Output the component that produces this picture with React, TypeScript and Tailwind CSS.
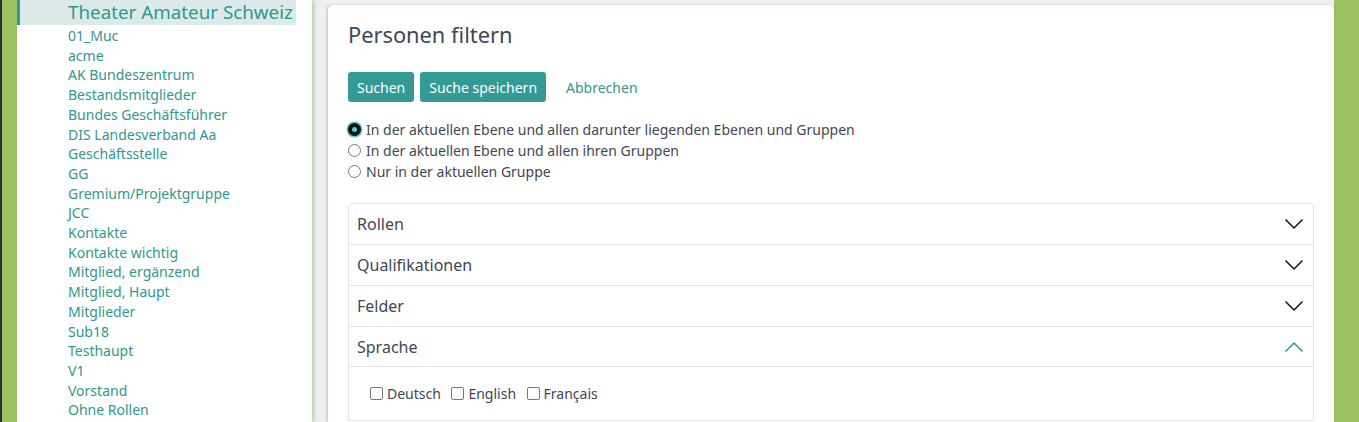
/**
 * Personen filtern — group sidebar plus filter card.
 */

const GROUPS = [
  '01_Muc',
  'acme',
  'AK Bundeszentrum',
  'Bestandsmitglieder',
  'Bundes Geschäftsführer',
  'DIS Landesverband Aa',
  'Geschäftsstelle',
  'GG',
  'Gremium/Projektgruppe',
  'JCC',
  'Kontakte',
  'Kontakte wichtig',
  'Mitglied, ergänzend',
  'Mitglied, Haupt',
  'Mitglieder',
  'Sub18',
  'Testhaupt',
  'V1',
  'Vorstand',
  'Ohne Rollen',
];

const RANGES = [
  'In der aktuellen Ebene und allen darunter liegenden Ebenen und Gruppen',
  'In der aktuellen Ebene und allen ihren Gruppen',
  'Nur in der aktuellen Gruppe',
];

const SECTIONS = ['Rollen', 'Qualifikationen', 'Felder'];

function Chevron({ up = false }: { up?: boolean }) {
  return (
    <svg width="20" height="12" viewBox="0 0 20 12" fill="none" className={up ? 'text-[#31978f]' : 'text-[#111]'}>
      <polyline
        points={up ? '1.5,10.5 10,2 18.5,10.5' : '1.5,1.5 10,10 18.5,1.5'}
        stroke="currentColor"
        strokeWidth="1.5"
      />
    </svg>
  );
}

export default function App() {
  return (
    <div
      className="flex h-[422px] overflow-hidden bg-[#9bbf62] text-[#3f4754]"
      style={{ fontFamily: '"Noto Sans", "Open Sans", sans-serif' }}
    >
      <div className="w-[2px] shrink-0 bg-[#2d2d2d]" />
      <div className="w-[15px] shrink-0" />

      <aside className="z-10 w-[295px] shrink-0 bg-white shadow-[2px_0_4px_rgba(140,180,80,0.55)]">
        <div className="flex h-[25px] w-[279px] items-center border-l-[3px] border-[#31978f] bg-[#dcebea] pl-[48px] text-[18.8px] text-[#31978f]">
          Theater Amateur Schweiz
        </div>
        <ul className="pt-[1px]">
          {GROUPS.map((g) => (
            <li key={g} className="pl-[51px] text-[14px] leading-[19.7px] text-[#31978f]">
              {g}
            </li>
          ))}
        </ul>
      </aside>

      <main className="flex-1 bg-[#eef0f3] pl-[16px] pt-[5px]">
        <div className="h-full rounded-t-[5px] bg-white px-[20px] pt-[19px] shadow-[-1px_0_3px_rgba(140,180,80,0.6)]">
          <h1 className="text-[21.8px] leading-[22px]">Personen filtern</h1>

          <div className="mt-[26px] flex items-center gap-[6px] text-[14px]">
            <button className="h-[30px] rounded-[3px] bg-[#339a95] px-[9px] text-white">Suchen</button>
            <button className="h-[30px] rounded-[3px] bg-[#339a95] px-[9px] text-white">Suche speichern</button>
            <a className="ml-[14px] text-[#31978f]">Abbrechen</a>
          </div>

          <div className="mt-[17px] flex flex-col text-[14px] leading-[21px]">
            {RANGES.map((r, i) => (
              <label key={r} className="flex items-center gap-[5px]">
                {i === 0 ? (
                  <span className="flex h-[13px] w-[13px] items-center justify-center rounded-full bg-[#111] shadow-[0_0_0_1.5px_#5fc7d0]">
                    <span className="h-[5px] w-[5px] rounded-full bg-[#5fc7d0]" />
                  </span>
                ) : (
                  <span className="h-[13px] w-[13px] rounded-full border-[1.5px] border-[#7a7585]" />
                )}
                {r}
              </label>
            ))}
          </div>

          <div className="mt-[21px] w-[966px] rounded-t-[5px] border border-b-0 border-[#e4e5ea]">
            {SECTIONS.map((s) => (
              <div key={s} className="flex h-[41px] items-center justify-between border-b border-[#e4e5ea] pl-[8px] pr-[9px] text-[16px]">
                <span>{s}</span>
                <Chevron />
              </div>
            ))}
            <div className="flex h-[40px] items-center justify-between border-b border-[#e4e5ea] pl-[8px] pr-[9px] text-[16px]">
              <span>Sprache</span>
              <Chevron up />
            </div>
            <div className="flex h-[54px] items-center gap-[10.5px] border-b border-[#e4e5ea] pl-[21px] text-[14px]">
              {['Deutsch', 'English', 'Français'].map((l) => (
                <label key={l} className="flex items-center gap-[4px]">
                  <span className="h-[13px] w-[13px] rounded-[2px] border-[1.5px] border-[#7a7585]" />
                  {l}
                </label>
              ))}
            </div>
          </div>
        </div>
      </main>

      <div className="w-[25px] shrink-0" />
    </div>
  );
}
